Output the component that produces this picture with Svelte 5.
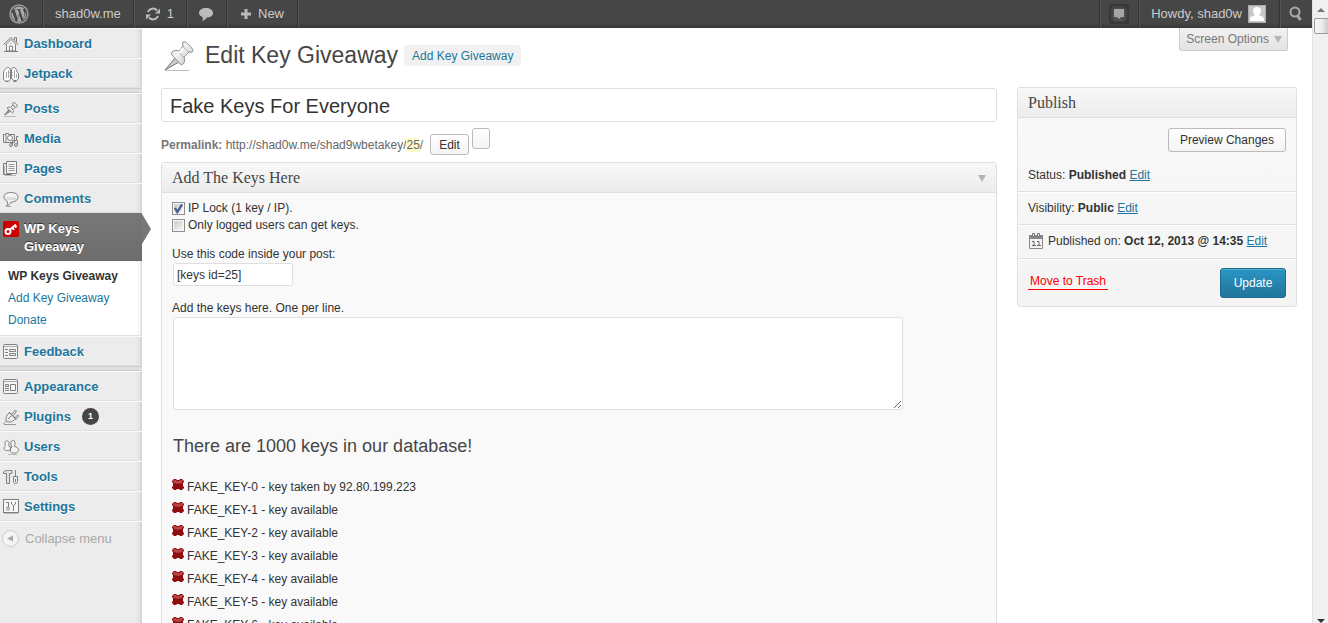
<script>
  const groups = [
    [
      { label: 'Dashboard', icon: 'home' },
      { label: 'Jetpack', icon: 'jetpack' }
    ],
    [
      { label: 'Posts', icon: 'pin' },
      { label: 'Media', icon: 'media' },
      { label: 'Pages', icon: 'pages' },
      { label: 'Comments', icon: 'comment' },
      {
        label: 'WP Keys Giveaway',
        icon: 'key',
        current: true,
        children: ['WP Keys Giveaway', 'Add Key Giveaway', 'Donate']
      },
      { label: 'Feedback', icon: 'form' }
    ],
    [
      { label: 'Appearance', icon: 'theme' },
      { label: 'Plugins', icon: 'plug', count: 1 },
      { label: 'Users', icon: 'users' },
      { label: 'Tools', icon: 'tools' },
      { label: 'Settings', icon: 'settings' }
    ]
  ];

  const keys = Array.from({ length: 7 }, (_, i) => ({
    name: `FAKE_KEY-${i}`,
    status: i === 0 ? 'key taken by 92.80.199.223' : 'key available'
  }));

  let title = $state('Fake Keys For Everyone');
  let ipLock = $state(true);
  let loggedOnly = $state(false);
  let newKeys = $state('');
</script>

{#snippet pushpin()}
  <path d="M2 30 12 18l4 4Z" fill="#ccc" stroke="#777" />
  <path d="M2 30.500h24" stroke="#bbb" />
  <path
    d="M20 2c2-1 4 1 6 3s4 4 4 6c-1 2-3 1-4 1l-5 5c1 3 1 5-1 7-1 1-2 1-3 0L9 15c-1-1-1-2 0-3 2-2 5-2 7-1l4-5c0-1-1-3 0-4Z"
    fill="url(#pinfill)"
    stroke="#909090"
  />
  <path d="M16 11c1 3 3 5 5 6M20 6c1 2 4 5 6 6" stroke="#aaa" fill="none" />
  <path d="m20 8-4 5" stroke="#fff" stroke-width="2" />
{/snippet}

{#snippet menuIcon(name)}
  <svg class="icon" viewBox="0 0 16 16" width="16" height="16" fill="none" stroke="#808080" aria-hidden="true">
    {#if name === 'home'}
      <path d="M3.500 8v7h9V8L8 3.500Z" fill="#f6f6f6" />
      <path d="M.5 8.500 8 1.500l7.500 7M11.500 4V1.500h2V6" />
      <path d="M2 9 8 3.500 14 9" stroke="#bbb" />
      <path d="M6.500 15v-5h3v5M8 7v1M1 15.500h14" />
    {:else if name === 'jetpack'}
      <path d="M.5 13.500V7C1.500 3 3 1.500 5 1.500S7.500 3 7.500 6v7.500l-2 1.500h-3Z" fill="#fff" />
      <path d="M8.500 12V4c0-1.500 1-2.500 2.500-2.500S14 4 14 6l1.500 2v5l-2 1.500h-3Z" fill="#fff" />
      <path d="M3.500 6v6M5.500 4v8M11.500 4v8M13.500 8v4" stroke="#aaa" />
      <path d="M6.500 6.500h3M6.500 9.500h3M2.500 15.500h3M10.500 15.500h3" />
    {:else if name === 'pin'}
      <path d="M1 15.500h12" stroke="#bbb" />
      <path d="m1.500 14 4-5 1.500 1.500Z" fill="#999" />
      <path d="M10 1.500c2 0 4 2 4.500 4-1 1-1.500.5-2 .5L10 8.500c.5 1.500.5 3-.5 3.500L4 7c1-1 2-1 3.500-.5L10 4c-.5-1-.5-2 0-2.500Z" fill="#f3f3f3" />
      <path d="m7.500 6.500 2.500 2M10 4l2.500 2" />
    {:else if name === 'media'}
      <path d="M.5 3.500h2v-1h3v1h6v8H.5Z" fill="#eee" />
      <circle cx="7" cy="7" r="2.500" fill="#fff" />
      <path d="M3 3.500v8M9.500 14V9.500h5v4.500M13.500 9V5M13.500 5.500h2" />
      <circle cx="8" cy="14" r="1.500" fill="#ddd" />
      <circle cx="13" cy="14" r="1.500" fill="#ddd" />
    {:else if name === 'pages'}
      <path d="M3 2.500H.5v11h8v1" stroke="#777" />
      <path d="M3.500.5h10v12h-10Z" fill="#f5f5f5" />
      <path d="M5.500 3.500h6m-6 2h6m-6 2h6m-6 2h6" stroke="#999" />
      <path d="M1.500 5v8M2 14.500h11" stroke="#bbb" />
    {:else if name === 'comment'}
      <path d="M8 1.500c4 0 7 1.500 7 4.500s-3 5-7 5c-1 2-2 3.500-5 4.500 1.500-1.500 2-3 1.500-5C2.500 9.500 1 8 1 6c0-3 3-4.500 7-4.500Z" fill="#f4f4f4" />
      <path d="M3 7.500h10" stroke="#ddd" stroke-width="3" />
      <path d="M3 15.500h5" stroke="#aaa" />
    {:else if name === 'key'}
      <rect width="16" height="16" rx="2" fill="#c00" stroke="none" />
      <circle cx="5" cy="10.500" r="2.500" stroke="#fff" stroke-width="2" />
      <path d="m7 8.500 6-5M9.500 7l1.500 2M12 5l1.500 1.500" stroke="#fff" stroke-width="2" />
    {:else if name === 'form'}
      <rect x=".5" y=".5" width="14" height="14" rx="1" fill="#f4f4f4" />
      <path d="M1 2.500h13" stroke="#aaa" />
      <path d="M2 5.500h3M2 8.500h3M2 11.500h3M6.500 5.500h6v2h-6ZM6.500 9.500h6v2h-6Z" />
    {:else if name === 'theme'}
      <rect x=".5" y=".5" width="14" height="14" rx="1" fill="#f4f4f4" />
      <path d="M1 2.500h13" stroke="#aaa" />
      <path d="M2.500 5.500h3v2h-3ZM2 9.500h4M2 11.500h4M7.500 5.500h5v6h-5Z" />
    {:else if name === 'plug'}
      <path d="M0 14.500c2 1 2-3 4-3M1 15.500h12" stroke="#999" />
      <path d="M3.500 12.500C2 9 4 5 7 3.500l5.500 6C11 12 7 14 3.500 12.500Z" fill="#eee" />
      <path d="m6 3.500 7 7M9 5l3.500-4 1 1-3 4.500M12 8.500 15 6l.5 1.500-3.500 3M5 10l3-3" />
    {:else if name === 'users'}
      <path d="M8 5.500C7 0 12.500 0 12 4.500c0 2-.5 2-.5 3 2 .5 4 1.500 4 3.500 0 4-8 4-8 1 0-2 0-3 1.500-4Z" fill="#f4f4f4" />
      <path d="M2 4.500C1.500 1 6.500 1 6 4.500c0 2-.5 2 0 3l2 .5-1 3c-2 1-6 .5-6-1.500C1 7.500 3 8 2 4.500Z" fill="#f4f4f4" />
      <path d="M5 15.500h9" stroke="#bbb" />
    {:else if name === 'tools'}
      <path d="M.5 4.500V3c1-1.500 3-1.500 8.500-1.500v3H6.500v10h-3v-10Z" fill="#e4e4e4" />
      <path d="M12.500 1v6m-2 .5h4v5c0 3-4 3-4 0ZM12.500 10v3" />
    {:else if name === 'settings'}
      <rect x=".5" y=".5" width="15" height="13" fill="#f6f6f6" />
      <path d="M5.500 3v5M10.500 7v5M3 3.500h3" />
      <circle cx="5" cy="9.500" r="1.500" />
      <path d="M8.500 3v2q2 3 4 0V3" />
      <path d="M1 14.500h14" stroke="#bbb" />
    {/if}
  </svg>
{/snippet}

<svg class="defs" width="0" height="0" aria-hidden="true">
  <defs>
    <linearGradient id="pinfill" x1="0" y1="0" x2="1" y2="1">
      <stop offset="0" stop-color="#ccc" />
      <stop offset=".4" stop-color="#f4f4f4" />
      <stop offset="1" stop-color="#bbb" />
    </linearGradient>
  </defs>
</svg>

<div class="window">
  <div class="page">
    <header class="adminbar">
      <a class="cell logo" href="#about" aria-label="About WordPress">
        <svg width="20" height="20" viewBox="0 0 20 20" aria-hidden="true">
          <circle cx="10" cy="10" r="9" fill="none" stroke="#999" stroke-width="1.500" />
          <path d="M3 7.500 6.500 17A7.500 7.500 0 0 1 3 7.500ZM4 5.500a7.500 7.500 0 0 1 11-1c-1 .5-1 1.500-.5 2.500 1 1.500 1.300 2.500.5 5L14 15l-3-9h1v-.7H7.500V6H9l1.200 3.500L8.500 14.500 5.700 6H7v-.5ZM10.200 11l2.400 6.400c-1.500.5-3.200.5-4.700 0ZM16.600 7c1.400 3.300.6 7-2.600 9.100L16.300 10c.5-1.200.5-2 .3-3Z" fill="#aaa" />
        </svg>
      </a>
      <a class="cell site" href="#site">shad0w.me</a>
      <a class="cell" href="#updates">
        <svg width="16" height="16" viewBox="0 0 16 16" fill="none" stroke="#bbb" stroke-width="2" aria-hidden="true">
          <path d="M3 6a5.300 5.300 0 0 1 9-1.500M13 10a5.300 5.300 0 0 1-9 1.500" />
          <path d="M15 2.500v5h-5ZM1 13.500v-5h5Z" fill="#bbb" stroke="none" />
        </svg>
        1
      </a>
      <a class="cell" href="#comments" aria-label="Comments">
        <svg width="16" height="16" viewBox="0 0 16 16" aria-hidden="true">
          <path d="M8 2c4 0 7 2 7 5s-3 4.500-6 4.500c-1 1.500-3 3-5 3.500 1-1.500 1-2.500.5-4C2.500 10 1 9 1 7c0-3 3-5 7-5Z" fill="#bbb" />
        </svg>
      </a>
      <a class="cell new" href="#new">
        <svg width="12" height="12" viewBox="0 0 12 12" aria-hidden="true">
          <path d="M4.500 1h3v3.500H11v3H7.500V11h-3V7.500H1v-3h3.500Z" fill="#bbb" />
        </svg>
        New
      </a>
      <span class="spacer"></span>
      <a class="cell notes" href="#notes" aria-label="Notifications">
        <svg width="20" height="20" viewBox="0 0 20 20" aria-hidden="true">
          <rect width="20" height="20" rx="3" fill="#383838" />
          <rect x="2" y="2" width="16" height="16" rx="4" fill="#444" />
          <rect x="4" y="4" width="12" height="13" rx="3" fill="#505050" />
          <path d="M5 5h10v8h-3l-2 2-2-2H5Z" fill="#a4a4a4" />
        </svg>
      </a>
      <a class="cell account" href="#profile">
        Howdy, shad0w
        <svg width="18" height="18" viewBox="0 0 18 18" aria-hidden="true">
          <rect x=".5" y=".5" width="17" height="17" fill="#c8c8c8" stroke="#aaa" />
          <path d="M9 2c3 0 4 2 4 4s-1 3-2 4c1 1 5 1 5 4v2H2v-2c0-3 4-3 5-4C6 9 5 8 5 6s1-4 4-4Z" fill="#fff" />
        </svg>
      </a>
      <button class="cell search" aria-label="Search">
        <svg width="16" height="16" viewBox="0 0 16 16" fill="none" stroke="#aaa" aria-hidden="true">
          <circle cx="7" cy="6" r="4.500" stroke-width="2" />
          <path d="m9 9 3.500 5" stroke-width="3" />
        </svg>
      </button>
    </header>

    <div class="body">
      <nav class="menu" aria-label="Main menu">
        {#each groups as group, g}
          {#if g > 0}<div class="separator"></div>{/if}
          {#each group as item}
            <a class="item" class:current={item.current} href="#{item.icon}">
              {@render menuIcon(item.icon)}
              <span class="name">{item.label}</span>
              {#if item.count}<span class="count">{item.count}</span>{/if}
            </a>
            {#if item.children}
              <div class="submenu">
                {#each item.children as child, c}
                  <a class:active={c === 0} href="#sub{c}">{child}</a>
                {/each}
              </div>
            {/if}
          {/each}
        {/each}
        <button class="collapse">
          <svg width="17" height="17" viewBox="0 0 17 17" aria-hidden="true">
            <circle cx="8.500" cy="8.500" r="8" fill="#f4f4f4" stroke="#ccc" />
            <path d="M11 5.500v6l-6-3Z" fill="#aaa" />
          </svg>
          Collapse menu
        </button>
      </nav>

      <main class="content">
        <button class="screen-options">Screen Options <span class="caret"></span></button>
        <div class="heading">
          <svg width="32" height="32" viewBox="0 0 32 32" fill="none" aria-hidden="true">{@render pushpin()}</svg>
          <h1>Edit Key Giveaway</h1>
          <a class="add-new" href="#add">Add Key Giveaway</a>
        </div>

        <div class="columns">
          <div class="primary">
            <input class="title" type="text" aria-label="Title" bind:value={title} />
            <div class="permalink">
              <span class="url"><b>Permalink:</b> http://shad0w.me/shad9wbetakey/<mark>25</mark>/</span>
              <button class="button small">Edit</button>
              <button class="button empty" aria-label="Shortlink"></button>
            </div>

            <section class="box keys">
              <h2>Add The Keys Here <span class="caret"></span></h2>
              <div class="inside">
                <label class="check"><input type="checkbox" bind:checked={ipLock} />IP Lock (1 key / IP).</label>
                <label class="check"><input type="checkbox" bind:checked={loggedOnly} />Only logged users can get keys.</label>
                <label class="field-label" for="code">Use this code inside your post:</label>
                <input id="code" class="code" type="text" value="[keys id=25]" readonly />
                <label class="field-label" for="newkeys">Add the keys here. One per line.</label>
                <textarea id="newkeys" bind:value={newKeys}></textarea>
                <h3>There are 1000 keys in our database!</h3>
                <ul>
                  {#each keys as key}
                    <li>
                      <svg width="12" height="12" viewBox="0 0 12 12" aria-hidden="true">
                        <path d="M2 0h2l1 1h2l1-1h2l2 2v1l-1 1v3l1 1v1l-2 2H8l-1-1H5l-1 1H2L0 9V8l1-1V4L0 3V2Z" fill="#910c0c" />
                        <path d="M2 1h2l1 1h2l1-1h2l1 1-1 2-4 1-4-1-1-2Z" fill="#b84444" />
                      </svg>
                      {key.name} - {key.status}
                    </li>
                  {/each}
                </ul>
              </div>
            </section>
          </div>

          <aside class="box publish">
            <h2>Publish</h2>
            <div class="preview"><button class="button">Preview Changes</button></div>
            <div class="row first"><span>Status: <b>Published</b> <a href="#status">Edit</a></span></div>
            <div class="row"><span>Visibility: <b>Public</b> <a href="#visibility">Edit</a></span></div>
            <div class="row date">
              <svg width="14" height="16" viewBox="0 0 14 16" aria-hidden="true">
                <path d="M.5 3.500h13v12H.5Z" fill="#f4f4f4" stroke="#888" />
                <path d="M0 2h14v4H0Z" fill="#888" />
                <path d="M3.500.5h2v3h-2ZM8.500.5h2v3h-2Z" fill="#eee" stroke="#777" />
                <path d="M3 8.500h2V12M3 12.500h4M8 8.500h2V12M8 12.500h4" fill="none" stroke="#666" />
              </svg>
              <span>Published on: <b>Oct 12, 2013 @ 14:35</b> <a href="#date">Edit</a></span>
            </div>
            <div class="row actions">
              <a class="trash" href="#trash">Move to Trash</a>
              <button class="update">Update</button>
            </div>
          </aside>
        </div>
      </main>
    </div>
  </div>

  <div class="scrollbar" aria-hidden="true">
    <span class="arrow up"></span>
    <span class="thumb"></span>
    <span class="arrow down"></span>
  </div>
</div>

<style>
  :global(body) {
    background: #fff;
    overflow: hidden;
  }
  .window {
    display: flex;
    height: 100vh;
    overflow: hidden;
    font: 12px/18px 'Liberation Sans', Arial, sans-serif;
    color: #333;
  }
  .window :global(*) {
    box-sizing: border-box;
  }
  .defs {
    position: absolute;
  }
  svg {
    flex: none;
    display: block;
  }
  a {
    color: #21759b;
  }
  button,
  input,
  textarea {
    font: inherit;
    color: inherit;
    margin: 0;
  }
  .page {
    flex: 1;
    min-width: 0;
    display: flex;
    flex-direction: column;
  }

  .adminbar {
    flex: none;
    display: flex;
    height: 28px;
    background: linear-gradient(to top, #373737, #464646 5px);
    font-size: 13px;
    line-height: 28px;
    color: #ccc;
  }
  .cell {
    display: flex;
    align-items: center;
    gap: 6px;
    padding: 0 12px 0 11px;
    border: 0;
    border-right: 1px solid #333;
    box-shadow: 1px 0 #555;
    background: none;
    color: #ccc;
    text-decoration: none;
    white-space: nowrap;
  }
  .cell.logo {
    padding: 0 13px 0 9px;
  }
  .cell.site {
    padding: 0 12px;
  }
  .cell.new {
    padding: 0 13px;
  }
  .spacer {
    flex: 1;
    border-right: 1px solid #333;
    box-shadow: 1px 0 #555;
  }
  .cell.notes {
    padding: 0 9px;
  }
  .cell.account {
    padding: 0 13px 0 12px;
  }
  .cell.search {
    padding: 0 8px;
    border-right: 0;
    box-shadow: none;
  }

  .body {
    flex: 1;
    min-height: 0;
    display: flex;
  }
  .menu {
    flex: none;
    width: 142px;
    background: linear-gradient(to left, #ccc, #e2e2e2 2px, #ececec 7px);
  }
  .item {
    position: relative;
    display: flex;
    align-items: flex-start;
    min-height: 30px;
    padding: 6px 2px 4px 3px;
    gap: 5px;
    border-top: 1px solid #f9f9f9;
    border-bottom: 1px solid #dfdfdf;
    font-size: 13px;
    font-weight: bold;
    color: #21759b;
    text-decoration: none;
    text-shadow: 0 1px 0 #fff;
  }
  .item .icon {
    margin-top: 1px;
  }
  .item.current {
    padding-right: 40px;
    border-color: #777 #777 #666;
    background: linear-gradient(to bottom, #777, #6d6d6d);
    color: #fff;
    text-shadow: 0 -1px 0 #333;
  }
  .item.current::after {
    content: '';
    position: absolute;
    top: 0;
    left: 100%;
    width: 9px;
    height: 30px;
    background: #777;
    clip-path: polygon(0 0, 100% 50%, 0 100%);
  }
  .count {
    width: 17px;
    height: 17px;
    margin-left: 6px;
    border-radius: 9px;
    background: #464646;
    color: #fff;
    font-size: 9px;
    line-height: 17px;
    text-align: center;
    text-shadow: none;
  }
  .separator {
    height: 5px;
    border: solid #ccc;
    border-width: 1px 0;
    background: #dfdfdf;
  }
  .submenu {
    display: flex;
    flex-direction: column;
    height: 75px;
    padding: 4px 0 0 8px;
    background: linear-gradient(to left, #d4d4d4, #f4f4f4 2px, #fff 6px);
    border-bottom: 1px solid #dfdfdf;
  }
  .submenu a {
    line-height: 22px;
    text-decoration: none;
  }
  .submenu a.active {
    font-weight: bold;
    color: #333;
  }
  .collapse {
    display: flex;
    align-items: center;
    gap: 6px;
    width: 100%;
    height: 34px;
    padding: 0 2px;
    border: 0;
    border-top: 1px solid #f9f9f9;
    background: none;
    font-size: 13px;
    color: #aaa;
  }

  .content {
    position: relative;
    flex: 1;
    min-width: 0;
    padding: 8px 15px 0 19px;
  }
  .screen-options {
    position: absolute;
    top: 0;
    right: 24px;
    display: flex;
    align-items: center;
    gap: 5px;
    height: 23px;
    padding: 0 5px 0 6px;
    border: 1px solid #ccc;
    border-top: 0;
    border-radius: 0 0 3px 3px;
    background: linear-gradient(#f1f1f1, #e3e3e3);
    color: #777;
  }
  .caret {
    width: 0;
    border: 4px solid transparent;
    border-top: 7px solid #b4b4b4;
    border-bottom: 0;
  }
  .heading {
    display: flex;
    align-items: center;
    height: 38px;
  }
  .heading svg {
    margin: 1px 10px 0 2px;
  }
  h1,
  h2,
  h3,
  ul {
    margin: 0;
    font-weight: normal;
  }
  h1 {
    font-size: 23px;
    line-height: 30px;
    color: #464646;
  }
  .add-new {
    margin-left: 6px;
    padding: 2px 8px 1px;
    border-radius: 3px;
    background: #f1f1f1;
    text-decoration: none;
  }
  .columns {
    display: flex;
    gap: 20px;
    align-items: flex-start;
    padding-top: 13px;
  }
  .primary {
    flex: 1;
    min-width: 0;
    padding-top: 1px;
  }
  .title {
    display: block;
    width: 100%;
    height: 34px;
    padding: 3px 8px 1px;
    border: 1px solid #dfdfdf;
    border-radius: 3px;
    background: #fff;
    font-size: 20px;
  }
  .permalink {
    display: flex;
    align-items: center;
    gap: 3px;
    height: 40px;
    padding-top: 5px;
    color: #666;
  }
  .permalink .url {
    padding-right: 4px;
  }
  .permalink b {
    color: #777;
  }
  mark {
    background: #fffbcc;
    color: inherit;
  }
  .button {
    height: 24px;
    padding: 0 11px;
    border: 1px solid #bbb;
    border-radius: 3px;
    background: linear-gradient(#fff, #f4f4f4);
    color: #333;
  }
  .button.small {
    height: 21px;
    padding: 0 8px;
    line-height: 18px;
  }
  .button.empty {
    width: 18px;
    height: 21px;
    padding: 0;
    margin-bottom: 12px;
  }
  .box {
    border: 1px solid #dfdfdf;
    border-radius: 3px;
    background: #f9f9f9;
  }
  .box h2 {
    display: flex;
    justify-content: space-between;
    align-items: center;
    height: 30px;
    padding: 1px 10px 0;
    border-bottom: 1px solid #dfdfdf;
    background: linear-gradient(#f8f8f8, #ececec);
    font: 16px/20px 'Liberation Serif', Georgia, serif;
    color: #464646;
  }
  .keys .inside {
    display: flex;
    flex-direction: column;
    align-items: flex-start;
    padding: 7px 10px 0;
  }
  .check {
    display: flex;
    align-items: center;
    gap: 3px;
    line-height: 17px;
  }
  .check input {
    appearance: none;
    width: 13px;
    height: 13px;
    border: 1px solid #8e8f8f;
    background: linear-gradient(135deg, #ccc, #f6f6f6) content-box #f4f4f4;
    padding: 1px;
  }
  .check input:checked {
    background:
      url("data:image/svg+xml,%3Csvg xmlns='http://www.w3.org/2000/svg' viewBox='0 0 11 11'%3E%3Cpath d='M2.500 5 4.500 8.500 8.500 2' fill='none' stroke='%234a5f97' stroke-width='2'/%3E%3C/svg%3E") border-box,
      linear-gradient(135deg, #ccc, #f6f6f6) content-box #f4f4f4;
  }
  .field-label {
    margin-top: 11px;
  }
  .code {
    width: 120px;
    height: 23px;
    margin: 0 0 2px 1px;
    padding: 2px 3px;
    border: 1px solid #dfdfdf;
    border-radius: 3px;
    background: #fff;
  }
  textarea {
    width: calc(90% - 3px);
    height: 93px;
    margin-left: 1px;
    padding: 3px;
    border: 1px solid #dfdfdf;
    border-radius: 3px;
    background: #fff;
    resize: both;
  }
  h3 {
    margin: 24px 0 17px 1px;
    font-size: 18px;
    line-height: 24px;
    color: #464646;
  }
  ul {
    padding: 0;
    list-style: none;
  }
  li {
    display: flex;
    align-items: center;
    gap: 3px;
    height: 23px;
  }
  li svg {
    margin-bottom: 3px;
  }

  .publish {
    flex: none;
    width: 280px;
    background: linear-gradient(#f9f9f9, #f4f4f4);
  }
  .preview {
    display: flex;
    justify-content: flex-end;
    padding: 10px 10px 0;
  }
  .row {
    display: flex;
    align-items: center;
    height: 33px;
    padding: 0 10px;
    border-top: 1px solid #dfdfdf;
    box-shadow: inset 0 1px #fff;
  }
  .row.first {
    height: 39px;
    padding-top: 6px;
    border-top: 0;
    box-shadow: none;
  }
  .date {
    gap: 5px;
    height: 34px;
    padding: 0 10px 2px 11px;
  }
  .actions {
    justify-content: space-between;
    height: 48px;
  }
  .trash {
    margin-bottom: 2px;
    padding: 0 2px;
    border-bottom: 1px solid #f00;
    line-height: 16px;
    color: #f00;
    text-decoration: none;
  }
  .update {
    min-width: 66px;
    height: 30px;
    padding: 0 12px;
    border: 1px solid #1e6a8d;
    border-radius: 3px;
    background: linear-gradient(#2a95c5, #21759b);
    box-shadow: inset 0 1px rgba(120, 200, 230, 0.500);
    color: #fff;
  }

  .scrollbar {
    flex: none;
    display: flex;
    flex-direction: column;
    align-items: center;
    width: 16px;
    padding: 8px 0 0 1px;
    border-left: 1px solid #e3e3e3;
    background: #f0f0f0;
  }
  .arrow {
    border: 4px solid transparent;
  }
  .up {
    border-top: 0;
    border-bottom-color: #777;
  }
  .thumb {
    width: 15px;
    height: 16px;
    margin-top: 6px;
    border: 1px solid #999;
    border-radius: 2px;
    background: linear-gradient(to right, #f6f6f6, #eee 50%, #ccc);
  }
  .down {
    margin-top: auto;
    border-bottom: 0;
    border-top-color: #333;
  }
</style>
